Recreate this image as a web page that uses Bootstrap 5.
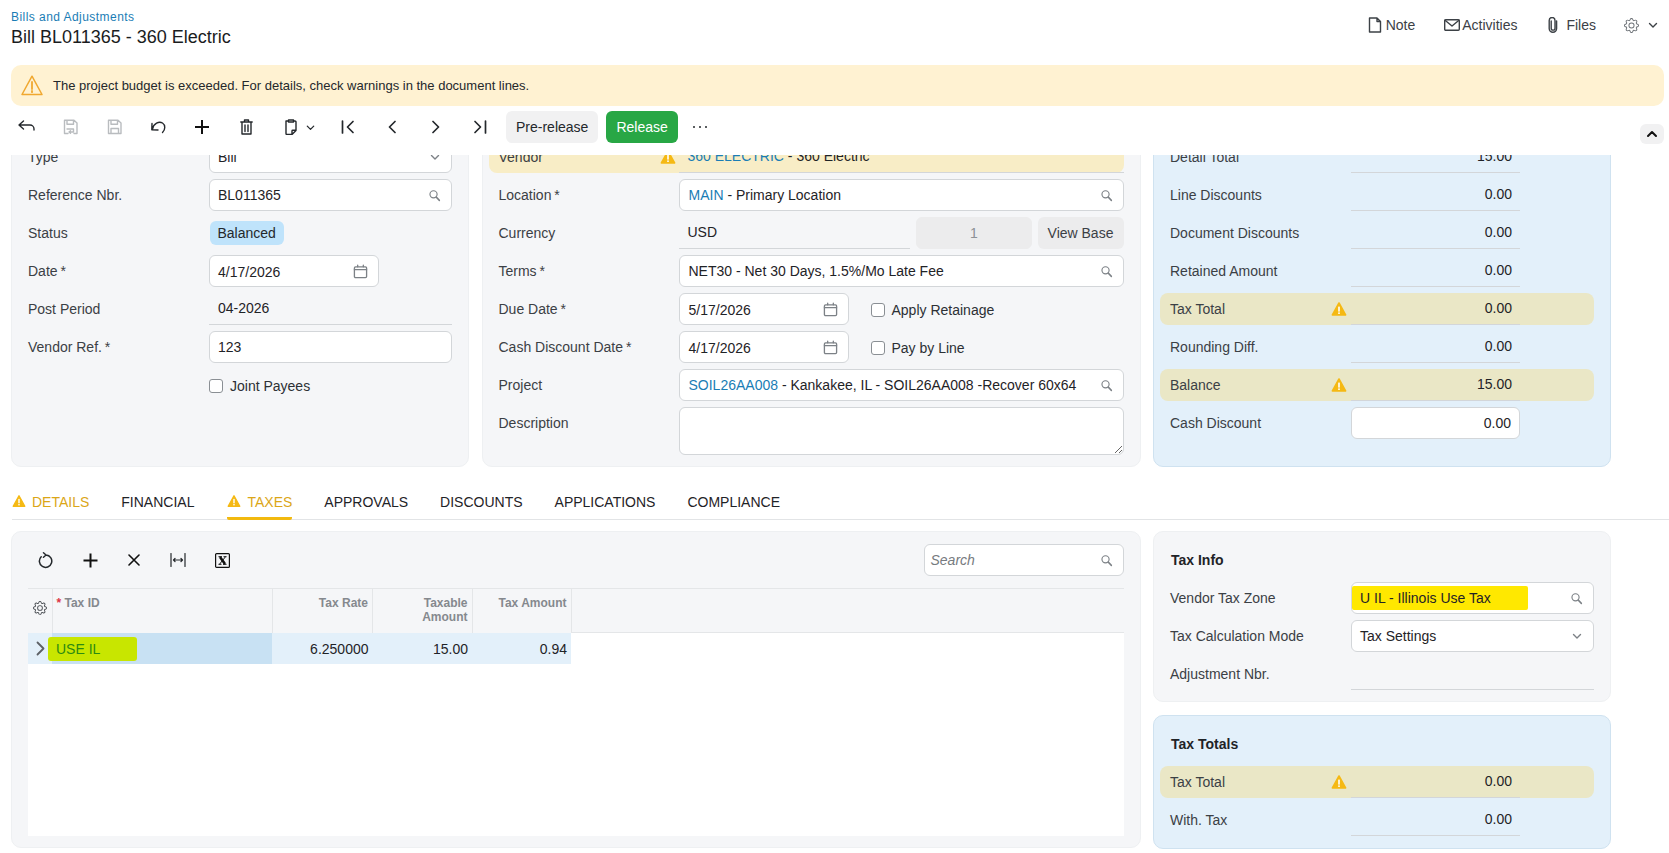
<!DOCTYPE html>
<html lang="en">
<head>
<meta charset="utf-8">
<title>Bill BL011365 - 360 Electric</title>
<link href="https://cdn.jsdelivr.net/npm/bootstrap@5.3.0/dist/css/bootstrap.min.css" rel="stylesheet">
<style>
html,body{height:853px;overflow:hidden}
body{font:14px/18px "Liberation Sans",Arial,sans-serif;color:#24282c;background:#fff}
a{text-decoration:none}
.ico{display:block;fill:none;stroke:currentColor;stroke-width:1.4;stroke-linecap:round;stroke-linejoin:round;flex:none}
.top-bar{height:65px;padding:11px 0 0 11px}
.crumb{font-size:12px;line-height:12px;color:#1a7db5;letter-spacing:.45px;display:block}
.doc-title{font-size:18px;line-height:22px;font-weight:400;margin:3px 0 0;color:#1a1c1e}
.top-acts{height:24px;margin-top:2px;padding-right:10px;color:#3c4146}
.ta-note-i{margin-right:4px}
.ta-note{margin-right:29px}
.ta-act-i{margin-right:2px}
.ta-act{margin-right:31px}
.ta-file-i{margin-right:8px}
.ta-file{margin-right:28px}
.ta-gear{margin-right:8px;color:#6e7378}
.warn-bar{height:41px;margin:0 5px 0 11px;background:#fff2d2;border-radius:10px;padding:0 10px;font-size:13px;gap:10px}
.tool-bar{height:49px;padding:5px 5px 0 4px}
.t-btn{width:44px;height:32px;color:#24282c}
.t-btn.off{color:#b9bcbf}
.t-wide{width:58px;padding-left:6px!important}
.act-btn{height:32px;padding:0 10px;border-radius:6px;font-size:14px;border:0}
.act-gray{background:#f1f1f2;color:#24282c;margin-left:4px}
.act-green{background:#28a745;color:#fff;margin-left:8px}
.fold-btn{width:24px;height:20px;background:#f1f1f2;border-radius:6px;margin-top:13px;color:#111}
.form-clip{height:332px;overflow:hidden;padding-left:11px}
.form-cols{display:grid;grid-template-columns:458px 659px 458px;grid-template-rows:343px;column-gap:12.5px;margin-top:-31px;height:343px}
.pane{background:#f5f6f8;border:1px solid #eef0f2;border-radius:10px;padding:16px 15px 0 16px}
.pane-a,.pane-b{padding-right:16px}
.pane-blue{background:#e3f0fa;border-color:#cfe2f0}
.frow{display:flex;align-items:center;height:32px;margin-bottom:6px;position:relative}
.lbl{flex:none;color:#3b4045}
.pane-a .lbl{width:181px}
.pane-b .lbl{width:180px}
.pane-c .lbl,.side-stack .lbl{width:181px}
.form-control.fld{display:flex;align-items:center;justify-content:space-between;height:32px;min-height:32px;padding:0 8px;font-size:14px;line-height:18px;border:1px solid #d3d6d9;border-radius:6px;background:#fff;color:#1f2327;flex:1 1 auto;min-width:0;white-space:nowrap}
.pane-b .form-control.fld{padding-left:9px}
.fld .ico{color:#7c8186;margin-right:2px}
.fld-date.form-control{flex:0 0 170px}
.fld-date span{padding-top:2px}
.under{flex:1 1 auto;height:32px;line-height:31px;padding:0 8px 0 9px;border-bottom:1px solid #d3d6d9;color:#1f2327;min-width:0}
.num{text-align:right}
.lnk{color:#1a7db5}
.req{color:#3b4045;margin-left:-1px}
.chk.form-check-input{width:14px;height:14px;margin:0;border:1px solid #8a8f94;border-radius:3px;flex:none}
.chk-lab{display:flex;align-items:center;gap:7px;color:#2c3035;padding-top:1px}
.pill-stat{background:#bfe3fb;border-radius:6px;padding:3px 8px;line-height:18px;margin-left:.5px}
.warned{background:#eae7c6;border-radius:8px;margin-left:-10px;padding-left:10px}
.pane-b .warned{background:#f8edc6}
.warned .wicn{position:absolute;top:8px;left:171px}
.warned-w{width:434px}
.wfield{width:169px;flex:none}
.form-control.fld.wfield{flex:0 0 169px;justify-content:flex-end}
.tabs-row{height:33px;margin:0 0 11px 12px;border-bottom:1px solid #e2e4e6;gap:32px;padding-top:5px}
.tab-i{display:flex;align-items:flex-start;gap:6px;height:28px;line-height:18px;color:#1f2327;text-transform:uppercase;padding-top:1px}
.tab-i svg{margin-top:1px}
.tab-w{color:#dba617}
.tab-on{border-bottom:3px solid #f2b90f;border-radius:0 0 2px 2px;height:28px;margin-left:1px}
.bottom-cols{display:grid;grid-template-columns:1129.5px 458px;column-gap:12.5px;padding-left:11px}
.grid-pane{height:317px;padding:0 16px 0 16px}
.grid-tools{height:56px}
.g-btn{width:44px;height:32px;color:#24282c;margin-top:12px}
.g-first{margin-left:-5px;margin-right:1px}
.search-box.form-control{flex:0 0 200px;font-style:italic;color:#777b80;margin-top:12px;padding-left:6px}
.grid-wrap{background:#fff;height:248px;border-top:1px solid #e4e6e8}
.tbl.table{width:543px;table-layout:fixed;margin:-44px 0 0;--bs-table-bg:transparent}
.tbl-wrap-head{background:#f5f6f8;height:44px;border-bottom:1px solid #e4e6e8}
.tbl th{height:44px;padding:7px 4px 0;vertical-align:top;font-size:12px;line-height:14px;font-weight:700;color:#85898e;border-bottom:0;border-right:1px solid #e4e6e8;text-align:right;background:#f5f6f8}
.tbl th:nth-child(1),.tbl th:nth-child(2){text-align:left}
.tbl th:nth-child(1){padding:0}
.tbl-gear{display:block;margin:12px auto 0;color:#4b4f54}
.tbl td{height:31px;padding:0 4px;vertical-align:middle;background:#e3f0fa;border:0;text-align:right;color:#1f2327}
.tbl td.sel{background:#c8e1f3;text-align:left;padding:0}
.lime{display:inline-block;background:#c8e600;color:#2c8a12;line-height:24px;padding:0 37px 0 8px;margin-left:-4px;border-radius:3px}
.hl-y{display:inline-block;background:#ffe800;line-height:24px;margin-left:-8px;padding:0 37px 0 8px;color:#1f2327;border-radius:2px}
.side-stack{display:flex;flex-direction:column;gap:13px}
.side-a{height:171px}.side-b{height:134px}
.pane-title{font-size:14px;line-height:18px;font-weight:700;color:#1f2327;margin:3px 0 13px;padding-left:1px}
.side-a .form-control.fld,.side-a .under{flex:0 0 243px}
.txt-desc.form-control{height:48px;min-height:48px;border:1px solid #d3d6d9;border-radius:6px}
.cur-under{flex:0 0 231px}
.form-control.fld.rate-box{flex:0 0 116px;margin-left:6px;background:#ececed;border-color:#ececed;color:#8d9196;justify-content:center}
.view-base{background:#ececed;color:#3b4045;margin-left:6px;flex:0 0 86px;padding:0}
.chk-gap{margin-left:22px}
.dsc-row{height:48px;align-items:flex-start}
.dsc-lab{padding-top:7px}
</style>
</head>
<body>
<svg width="0" height="0" class="position-absolute">
<defs>
<symbol id="w" viewBox="0 0 16 16"><path d="M8 2 14.6 14H1.4Z" fill="#f5b914" stroke="#f5b914" stroke-width="1.6" stroke-linejoin="round"/><rect x="7.2" y="5.6" width="1.6" height="5" fill="#fff" stroke="none"/><rect x="7.2" y="11.4" width="1.6" height="1.6" fill="#fff" stroke="none"/></symbol>
<symbol id="srch" viewBox="0 0 16 16"><circle cx="6.8" cy="6.6" r="4.4"/><path d="M10.2 10 14 14" stroke-width="1.8"/></symbol>
<symbol id="cal" viewBox="0 0 16 16"><rect x="1.5" y="3" width="13" height="11.5" rx="1.2"/><path d="M1.5 6h13M5 1.3V3M11 1.3V3"/></symbol>
<symbol id="dn" viewBox="0 0 12 12"><path d="M2.5 4.5 6 8l3.5-3.5"/></symbol>
<symbol id="gear" viewBox="0 0 16 16"><path stroke="none" fill="currentColor" d="M8 4.754a3.246 3.246 0 1 0 0 6.492 3.246 3.246 0 0 0 0-6.492zM5.754 8a2.246 2.246 0 1 1 4.492 0 2.246 2.246 0 0 1-4.492 0z"/><path stroke="none" fill="currentColor" d="M9.796 1.343c-.527-1.79-3.065-1.79-3.592 0l-.094.319a.873.873 0 0 1-1.255.52l-.292-.16c-1.64-.892-3.433.902-2.54 2.541l.159.292a.873.873 0 0 1-.52 1.255l-.319.094c-1.79.527-1.79 3.065 0 3.592l.319.094a.873.873 0 0 1 .52 1.255l-.16.292c-.892 1.64.901 3.434 2.541 2.54l.292-.159a.873.873 0 0 1 1.255.52l.094.319c.527 1.79 3.065 1.79 3.592 0l.094-.319a.873.873 0 0 1 1.255-.52l.292.16c1.64.893 3.434-.902 2.54-2.541l-.159-.292a.873.873 0 0 1 .52-1.255l.319-.094c1.79-.527 1.79-3.065 0-3.592l-.319-.094a.873.873 0 0 1-.52-1.255l.16-.292c.893-1.64-.902-3.433-2.541-2.54l-.292.159a.873.873 0 0 1-1.255-.52l-.094-.319zm-2.633.283c.246-.835 1.428-.835 1.674 0l.094.319a1.873 1.873 0 0 0 2.693 1.115l.291-.16c.764-.415 1.6.42 1.184 1.185l-.159.292a1.873 1.873 0 0 0 1.116 2.692l.318.094c.835.246.835 1.428 0 1.674l-.319.094a1.873 1.873 0 0 0-1.115 2.693l.16.291c.415.764-.42 1.6-1.185 1.184l-.291-.159a1.873 1.873 0 0 0-2.693 1.116l-.094.318c-.246.835-1.428.835-1.674 0l-.094-.319a1.873 1.873 0 0 0-2.692-1.115l-.292.16c-.764.415-1.6-.42-1.184-1.185l.159-.291A1.873 1.873 0 0 0 1.945 8.93l-.319-.094c-.835-.246-.835-1.428 0-1.674l.319-.094A1.873 1.873 0 0 0 3.06 4.377l-.16-.292c-.415-.764.42-1.6 1.185-1.184l.292.159a1.873 1.873 0 0 0 2.692-1.115l.094-.319z"/></symbol>
</defs>
</svg>

<header class="top-bar d-flex justify-content-between">
  <div>
    <a class="crumb" href="#">Bills and Adjustments</a>
    <h1 class="doc-title">Bill BL011365 - 360 Electric</h1>
  </div>
  <div class="top-acts d-flex align-items-center">
    <svg class="ico ta-note-i" width="14" height="16" viewBox="0 0 14 16"><path d="M1.5 1h7.5l3.5 3.500V15h-11zM9 1v3.500h3.500"/></svg><span class="ta-note">Note</span>
    <svg class="ico ta-act-i" width="16" height="12" viewBox="0 0 16 12"><rect x=".7" y=".7" width="14.6" height="10.6" rx="1"/><path d="M1 1.200 8 7l7-5.800"/></svg><span class="ta-act">Activities</span>
    <svg class="ico ta-file-i" width="10" height="16" viewBox="0 0 10 16"><path d="M3.200 4v7.200a1.900 1.900 0 0 0 3.800 0V3.400a2.900 2.900 0 0 0-5.800 0v8.200a3.600 3.600 0 0 0 7.400 0V4"/></svg><span class="ta-file">Files</span>
    <svg class="ico ta-gear" width="15" height="15"><use href="#gear"/></svg>
    <svg class="ico" width="12" height="12"><use href="#dn"/></svg>
  </div>
</header>

<div class="warn-bar d-flex align-items-center" role="alert">
  <svg width="22" height="21" viewBox="0 0 22 21" class="ico" style="color:#f0a830;stroke-width:1.5"><path d="M11 1.200 21 19.500H1Z"/><path d="M11 7v7M11 16v1.200" stroke-width="1.8"/></svg>
  <span>The project budget is exceeded. For details, check warnings in the document lines.</span>
</div>

<div class="tool-bar d-flex align-items-start">
  <button class="btn t-btn p-0 border-0 d-flex align-items-center justify-content-center" aria-label="Back"><svg class="ico" width="17" height="14" viewBox="0 0 17 14"><path d="M1 5h11a4 4 0 0 1 4 4v1M5.500 1 1 5l4.500 4"/></svg></button>
  <button class="btn t-btn off p-0 border-0 d-flex align-items-center justify-content-center" aria-label="Save and close"><svg class="ico" width="15" height="16" viewBox="0 0 15 16"><path d="M5 14.500H1.500V1.200H11L14 4v10.500h-3M4 1.200v4h6.500v-4M4 10h6.500v3H6M6 13l1.500-1.300M6 13l1.500 1.300"/></svg></button>
  <button class="btn t-btn off p-0 border-0 d-flex align-items-center justify-content-center" aria-label="Save"><svg class="ico" width="15" height="16" viewBox="0 0 15 16"><path d="M1.500 1.200H11L14 4v10.500H1.500zM4 1.200v4h6.500v-4M4 14.500V9.500h7.500v5"/></svg></button>
  <button class="btn t-btn p-0 border-0 d-flex align-items-center justify-content-center" aria-label="Undo"><svg class="ico" width="16" height="14" viewBox="0 0 16 14"><path d="M2.500 9C3.500 3.500 9 1 12.500 3c3 2 3 6.500 0 9.500M2 3.500 1.800 9.800 8 10"/></svg></button>
  <button class="btn t-btn p-0 border-0 d-flex align-items-center justify-content-center" aria-label="Add"><svg class="ico" width="16" height="16" viewBox="0 0 16 16" style="stroke-width:2;color:#111"><path d="M8 1v14M1 8h14" stroke-linecap="butt"/></svg></button>
  <button class="btn t-btn p-0 border-0 d-flex align-items-center justify-content-center" aria-label="Delete"><svg class="ico" width="13" height="16" viewBox="0 0 13 16"><path d="M.8 3h11.400M4.500 3V1h4v2M2 3v12h9V3M5 6v6.500M8 6v6.500"/></svg></button>
  <button class="btn t-btn t-wide p-0 border-0 d-flex align-items-center justify-content-center gap-2" aria-label="Copy"><svg class="ico" width="12" height="16" viewBox="0 0 12 16"><path d="M3.500 2H1v12.500q0 1 1 1h5l4-4V3q0-1-1-1H8.500M3.500 3V1h5v2zM7 15.500V12q0-.7.700-.7H11"/></svg><svg class="ico" width="11" height="11"><use href="#dn"/></svg></button>
  <button class="btn t-btn p-0 border-0 d-flex align-items-center justify-content-center" aria-label="First"><svg class="ico" width="14" height="14" viewBox="0 0 14 14" style="stroke-width:1.7"><path d="M1.500 1v12M12 1.500 6.500 7l5.500 5.500"/></svg></button>
  <button class="btn t-btn p-0 border-0 d-flex align-items-center justify-content-center" aria-label="Previous"><svg class="ico" width="8" height="14" viewBox="0 0 8 14" style="stroke-width:1.7"><path d="M7 1.500 1.500 7 7 12.500"/></svg></button>
  <button class="btn t-btn p-0 border-0 d-flex align-items-center justify-content-center" aria-label="Next"><svg class="ico" width="8" height="14" viewBox="0 0 8 14" style="stroke-width:1.7"><path d="M1 1.500 6.500 7 1 12.500"/></svg></button>
  <button class="btn t-btn p-0 border-0 d-flex align-items-center justify-content-center" aria-label="Last"><svg class="ico" width="14" height="14" viewBox="0 0 14 14" style="stroke-width:1.7"><path d="M12.500 1v12M2 1.500 7.500 7 2 12.500"/></svg></button>
  <button class="btn act-btn act-gray">Pre-release</button>
  <button class="btn act-btn act-green">Release</button>
  <button class="btn t-btn p-0 border-0 d-flex align-items-center justify-content-center" aria-label="More"><svg width="16" height="4" viewBox="0 0 16 4" fill="#24282c"><circle cx="2" cy="2" r="1"/><circle cx="8" cy="2" r="1"/><circle cx="14" cy="2" r="1"/></svg></button>
  <button class="btn fold-btn p-0 border-0 ms-auto d-flex align-items-center justify-content-center" aria-label="Collapse"><svg class="ico" width="12" height="8" viewBox="0 0 12 8" style="stroke-width:2"><path d="M2 6l4-4 4 4"/></svg></button>
</div>

<div class="form-clip">
  <div class="form-cols">
    <section class="pane pane-a">
      <div class="frow"><span class="lbl">Type</span><div class="form-control fld"><span>Bill</span><svg class="ico" width="12" height="12"><use href="#dn"/></svg></div></div>
      <div class="frow"><span class="lbl">Reference Nbr.</span><div class="form-control fld"><span>BL011365</span><svg class="ico" width="13" height="13"><use href="#srch"/></svg></div></div>
      <div class="frow"><span class="lbl">Status</span><span class="pill-stat">Balanced</span></div>
      <div class="frow"><span class="lbl">Date<span class="req"> *</span></span><div class="form-control fld fld-date"><span>4/17/2026</span><svg class="ico" width="15" height="15"><use href="#cal"/></svg></div></div>
      <div class="frow"><span class="lbl">Post Period</span><div class="under">04-2026</div></div>
      <div class="frow"><span class="lbl">Vendor Ref.<span class="req"> *</span></span><div class="form-control fld"><span>123</span></div></div>
      <div class="frow"><span class="lbl"></span><label class="chk-lab"><input type="checkbox" class="form-check-input chk">Joint Payees</label></div>
    </section>

    <section class="pane pane-b">
      <div class="frow warned"><span class="lbl">Vendor</span><svg class="wicn" width="16" height="16"><use href="#w"/></svg><div class="under"><a class="lnk" href="#">360 ELECTRIC</a> - 360 Electric</div></div>
      <div class="frow"><span class="lbl">Location<span class="req"> *</span></span><div class="form-control fld"><span><a class="lnk" href="#">MAIN</a> - Primary Location</span><svg class="ico" width="13" height="13"><use href="#srch"/></svg></div></div>
      <div class="frow"><span class="lbl">Currency</span><div class="under cur-under">USD</div><div class="form-control fld rate-box">1</div><button class="btn act-btn view-base">View Base</button></div>
      <div class="frow"><span class="lbl">Terms<span class="req"> *</span></span><div class="form-control fld"><span>NET30 - Net 30 Days, 1.5%/Mo Late Fee</span><svg class="ico" width="13" height="13"><use href="#srch"/></svg></div></div>
      <div class="frow"><span class="lbl">Due Date<span class="req"> *</span></span><div class="form-control fld fld-date"><span>5/17/2026</span><svg class="ico" width="15" height="15"><use href="#cal"/></svg></div><label class="chk-lab chk-gap"><input type="checkbox" class="form-check-input chk">Apply Retainage</label></div>
      <div class="frow"><span class="lbl">Cash Discount Date<span class="req"> *</span></span><div class="form-control fld fld-date"><span>4/17/2026</span><svg class="ico" width="15" height="15"><use href="#cal"/></svg></div><label class="chk-lab chk-gap"><input type="checkbox" class="form-check-input chk">Pay by Line</label></div>
      <div class="frow"><span class="lbl">Project</span><div class="form-control fld"><span><a class="lnk" href="#">SOIL26AA008</a> - Kankakee, IL - SOIL26AA008 -Recover 60x64</span><svg class="ico" width="13" height="13"><use href="#srch"/></svg></div></div>
      <div class="frow dsc-row"><span class="lbl dsc-lab">Description</span><textarea class="form-control txt-desc" aria-label="Description"></textarea></div>
    </section>

    <section class="pane pane-blue pane-c">
      <div class="frow"><span class="lbl">Detail Total</span><div class="under num wfield">15.00</div></div>
      <div class="frow"><span class="lbl">Line Discounts</span><div class="under num wfield">0.00</div></div>
      <div class="frow"><span class="lbl">Document Discounts</span><div class="under num wfield">0.00</div></div>
      <div class="frow"><span class="lbl">Retained Amount</span><div class="under num wfield">0.00</div></div>
      <div class="frow warned warned-w"><span class="lbl">Tax Total</span><svg class="wicn" width="16" height="16"><use href="#w"/></svg><div class="under num wfield">0.00</div></div>
      <div class="frow"><span class="lbl">Rounding Diff.</span><div class="under num wfield">0.00</div></div>
      <div class="frow warned warned-w"><span class="lbl">Balance</span><svg class="wicn" width="16" height="16"><use href="#w"/></svg><div class="under num wfield">15.00</div></div>
      <div class="frow"><span class="lbl">Cash Discount</span><div class="form-control fld wfield"><span>0.00</span></div></div>
    </section>
  </div>
</div>

<nav class="tabs-row d-flex">
  <a class="tab-i tab-w" href="#"><svg width="14" height="14"><use href="#w"/></svg>Details</a>
  <a class="tab-i" href="#">Financial</a>
  <a class="tab-i tab-w tab-on" href="#"><svg width="14" height="14"><use href="#w"/></svg>Taxes</a>
  <a class="tab-i" href="#">Approvals</a>
  <a class="tab-i" href="#">Discounts</a>
  <a class="tab-i" href="#">Applications</a>
  <a class="tab-i" href="#">Compliance</a>
</nav>

<div class="bottom-cols">
  <section class="pane grid-pane">
    <div class="grid-tools d-flex">
      <button class="btn g-btn g-first p-0 border-0 d-flex align-items-center justify-content-center" aria-label="Refresh"><svg class="ico" width="15" height="17" viewBox="0 0 15 17" style="stroke-width:1.5"><path d="M3.200 4.800a6.200 6.200 0 1 0 4.800-1.800M5.500 .8 8 3 5.500 5.200"/></svg></button>
      <button class="btn g-btn p-0 border-0 d-flex align-items-center justify-content-center" aria-label="Add row"><svg class="ico" width="15" height="15" viewBox="0 0 15 15" style="stroke-width:2;color:#111"><path d="M7.500 .5v14M.5 7.500h14" stroke-linecap="butt"/></svg></button>
      <button class="btn g-btn p-0 border-0 d-flex align-items-center justify-content-center" aria-label="Delete row"><svg class="ico" width="12" height="12" viewBox="0 0 12 12" style="stroke-width:1.6;color:#111"><path d="M1 1l10 10M11 1 1 11"/></svg></button>
      <button class="btn g-btn p-0 border-0 d-flex align-items-center justify-content-center" aria-label="Fit to screen"><svg class="ico" width="16" height="14" viewBox="0 0 16 14" style="stroke-width:1.2"><path d="M1 .5v13M15 .5v13M3.500 7h9M5 5.500 3.500 7 5 8.500M11 5.500 12.500 7 11 8.500"/></svg></button>
      <button class="btn g-btn p-0 border-0 d-flex align-items-center justify-content-center" aria-label="Export to Excel"><svg class="ico" width="15" height="15" viewBox="0 0 15 15" style="stroke-width:1.200;color:#111"><rect x=".6" y=".6" width="13.800" height="13.800" rx="1"/><path d="M5 4l5 7" stroke-width="2.500" stroke-linecap="butt"/><path d="M10.300 4 4.700 11" stroke-width="1"/><path d="M3.500 3.700h3.500M8.500 3.700h3M3.500 11.300h3M8 11.300h3.500" stroke-width="1" stroke-linecap="butt"/></svg></button>
      <div class="form-control fld search-box ms-auto"><span>Search</span><svg class="ico" width="13" height="13"><use href="#srch"/></svg></div>
    </div>
    <div class="grid-wrap">
      <div class="tbl-wrap-head"></div>
      <table class="table tbl">
        <colgroup><col style="width:24px"><col style="width:220px"><col style="width:100.500px"><col style="width:99.500px"><col style="width:99px"></colgroup>
        <thead><tr>
          <th><svg class="tbl-gear" width="14" height="14"><use href="#gear"/></svg></th>
          <th><span class="text-danger">*</span> Tax ID</th>
          <th>Tax Rate</th>
          <th>Taxable Amount</th>
          <th>Tax Amount</th>
        </tr></thead>
        <tbody><tr>
          <td class="p-0"><svg class="ico mx-auto" width="9" height="15" viewBox="0 0 9 15" style="color:#5d6166;stroke-width:1.8"><path d="M1.500 1.500 7.500 7.500l-6 6"/></svg></td>
          <td class="sel"><span class="lime">USE IL</span></td>
          <td>6.250000</td>
          <td>15.00</td>
          <td>0.94</td>
        </tr></tbody>
      </table>
    </div>
  </section>

  <div class="side-stack">
    <section class="pane side-a">
      <h2 class="pane-title">Tax Info</h2>
      <div class="frow"><span class="lbl">Vendor Tax Zone</span><div class="form-control fld"><span class="hl-y">U IL - Illinois Use Tax</span><svg class="ico" width="13" height="13"><use href="#srch"/></svg></div></div>
      <div class="frow"><span class="lbl">Tax Calculation Mode</span><div class="form-control fld"><span>Tax Settings</span><svg class="ico" width="12" height="12"><use href="#dn"/></svg></div></div>
      <div class="frow"><span class="lbl">Adjustment Nbr.</span><div class="under"></div></div>
    </section>
    <section class="pane pane-blue side-b">
      <h2 class="pane-title">Tax Totals</h2>
      <div class="frow warned warned-w"><span class="lbl">Tax Total</span><svg class="wicn" width="16" height="16"><use href="#w"/></svg><div class="under num wfield">0.00</div></div>
      <div class="frow"><span class="lbl">With. Tax</span><div class="under num wfield">0.00</div></div>
    </section>
  </div>
</div>
<script src="https://cdn.jsdelivr.net/npm/bootstrap@5.3.0/dist/js/bootstrap.bundle.min.js"></script>
</body>
</html>
